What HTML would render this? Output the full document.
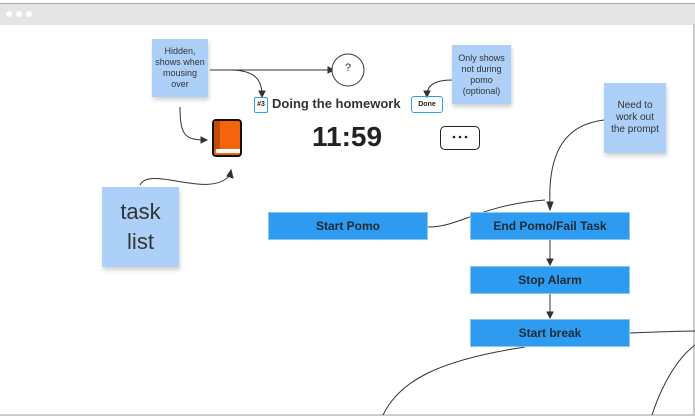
<!DOCTYPE html><html><head><style>
body{margin:0;width:695px;height:416px;background:#fff;position:relative;overflow:hidden;font-family:"Liberation Sans",sans-serif}
.a{position:absolute}
.st{position:absolute;background:#acd0f7;box-shadow:1px 3px 4px rgba(0,0,0,.18);color:#333;font-size:9px;line-height:11px;text-align:center;display:flex;align-items:center;justify-content:center}
.bx{position:absolute;background:#2d9bf0;border:1px solid #8cc6f5;color:#1d2a36;font-weight:bold;font-size:12px;display:flex;align-items:center;justify-content:center;box-sizing:border-box}
</style></head><body>
<div class="a" style="left:0;top:3px;width:695px;height:21px;background:#e5e5e5;border-top:1px solid #aaa"></div>
<div class="a" style="left:6px;top:11px;width:6px;height:6px;border-radius:50%;background:#fff"></div>
<div class="a" style="left:16px;top:11px;width:6px;height:6px;border-radius:50%;background:#fff"></div>
<div class="a" style="left:26px;top:11px;width:6px;height:6px;border-radius:50%;background:#fff"></div>
<div class="a" style="left:693px;top:24px;width:2px;height:392px;background:#ccc"></div>
<div class="a" style="left:0;top:414px;width:695px;height:2px;background:#ccc"></div>
<svg class="a" style="left:0;top:0" width="695" height="416" fill="none" stroke="#333" stroke-width="1">
<path d="M210 70 H332"/><path d="M328 67 L334 70 L328 73Z" fill="#333"/>
<path d="M230 70 C255 70 262 80 262 95"/><path d="M259 91 L262 97 L265 91Z" fill="#333"/>
<path d="M180 107 C180 135 185 140 205 140"/><path d="M201 137 L207 140 L201 143Z" fill="#333"/>
<path d="M452 80 C435 80 427 85 427 95"/><path d="M424 91 L427 97 L430 91Z" fill="#333"/>
<path d="M140 185 C150 165 210 200 230 175"/><path d="M227 176 L231 170 L233 178Z" fill="#333"/>
<path d="M604 120 C560 125 548 160 550 205"/><path d="M547 202 L550 210 L553 202Z" fill="#333"/>
<path d="M428 227 C460 227 480 205 545 200"/>
<path d="M550 240 V264"/><path d="M547 259 L550 265 L553 259Z" fill="#333"/>
<path d="M550 294 V317"/><path d="M547 312 L550 318 L553 312Z" fill="#333"/>
<path d="M629 333 C660 332 680 331 695 331"/>
<path d="M525 347 C440 360 400 380 383 415"/>
<path d="M695 345 C675 360 660 390 652 415"/>
<circle cx="348" cy="70" r="16" fill="#fff"/>
<circle cx="454" cy="137" r="1.3" fill="#222" stroke="none"/>
<circle cx="460" cy="137" r="1.3" fill="#222" stroke="none"/>
<circle cx="466" cy="137" r="1.3" fill="#222" stroke="none"/>
</svg>
<div class="a" style="left:340px;top:62px;width:16px;text-align:center;font-size:11px;color:#333">?</div>
<div class="st" style="left:152px;top:39px;width:56px;height:58px">Hidden,<br>shows when<br>mousing<br>over</div>
<div class="st" style="left:452px;top:45px;width:59px;height:59px">Only shows<br>not during<br>pomo<br>(optional)</div>
<div class="st" style="left:604px;top:83px;width:62px;height:70px;font-size:10px;line-height:12px">Need to<br>work out<br>the prompt</div>
<div class="st" style="left:102px;top:187px;width:77px;height:80px;font-size:22px;line-height:30px">task<br>list</div>
<div class="a" style="left:254px;top:97px;width:12px;height:14px;border:1px solid #2d9bf0;border-radius:2px;font-size:7px;font-weight:bold;text-align:center;line-height:14px;color:#222">#3</div>
<div class="a" style="left:272px;top:96px;font-size:13px;font-weight:bold;color:#333">Doing the homework</div>
<div class="a" style="left:411px;top:96px;width:30px;height:15px;border:1px solid #2d9bf0;border-radius:3px;font-size:7px;font-weight:bold;text-align:center;line-height:15px;color:#222">Done</div>
<div class="a" style="left:212px;top:119px;width:30px;height:38px;background:#f4640c;border:2px solid #111;border-radius:4px;box-sizing:border-box"></div>
<div class="a" style="left:214px;top:121px;width:6px;height:28px;background:#c24c06"></div>
<div class="a" style="left:216px;top:149px;width:24px;height:4px;background:#fff"></div>
<div class="a" style="left:312px;top:121px;font-size:28px;font-weight:bold;color:#222">11:59</div>
<div class="a" style="left:440px;top:126px;width:40px;height:24px;border:1px solid #222;border-radius:5px;box-sizing:border-box"></div>
<div class="bx" style="left:268px;top:212px;width:160px;height:28px">Start Pomo</div>
<div class="bx" style="left:470px;top:212px;width:160px;height:28px">End Pomo/Fail Task</div>
<div class="bx" style="left:470px;top:266px;width:160px;height:28px">Stop Alarm</div>
<div class="bx" style="left:470px;top:319px;width:160px;height:28px">Start break</div>
</body></html>
